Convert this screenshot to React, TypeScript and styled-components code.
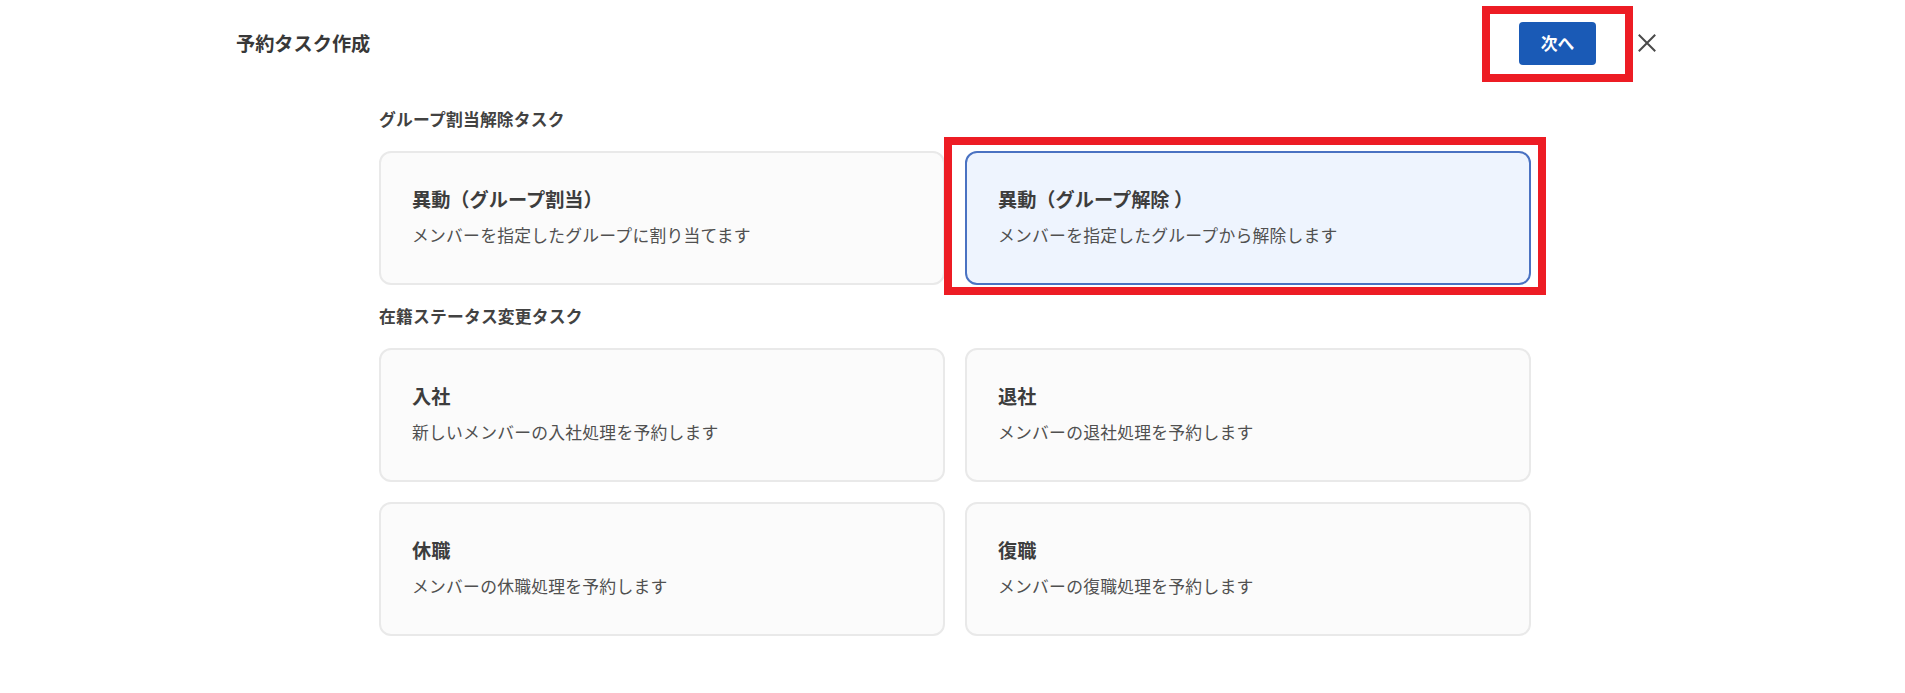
import styled, { createGlobalStyle } from "styled-components";

const GlobalStyle = createGlobalStyle`
  * {
    box-sizing: border-box;
  }
  body {
    margin: 0;
    background: #ffffff;
    font-family: "Noto Sans CJK JP", "Noto Sans", sans-serif;
    color: #3b3b3b;
  }
`;

type Task = {
  title: string;
  description: string;
  selected?: boolean;
};

const groupTasks: Task[] = [
  { title: "異動（グループ割当）", description: "メンバーを指定したグループに割り当てます" },
  { title: "異動（グループ解除 ）", description: "メンバーを指定したグループから解除します", selected: true },
];

const statusTasks: Task[] = [
  { title: "入社", description: "新しいメンバーの入社処理を予約します" },
  { title: "退社", description: "メンバーの退社処理を予約します" },
  { title: "休職", description: "メンバーの休職処理を予約します" },
  { title: "復職", description: "メンバーの復職処理を予約します" },
];

function CloseIcon() {
  return (
    <svg width="18" height="18" viewBox="0 0 18 18" fill="none">
      <path d="M1.5 1.5L16.5 16.5M16.5 1.5L1.5 16.5" stroke="#4a4a4a" strokeWidth="2" strokeLinecap="square" />
    </svg>
  );
}

function TaskCard({ task }: { task: Task }) {
  return (
    <Card $selected={task.selected}>
      <CardTitle>{task.title}</CardTitle>
      <CardText>{task.description}</CardText>
      {task.selected && <Highlight $top={-16} $right={-17} $bottom={-12} $left={-23} />}
    </Card>
  );
}

function App() {
  return (
    <Page>
      <GlobalStyle />
      <Header>
        <Title>予約タスク作成</Title>
        <Actions>
          <NextButton>
            次へ
            <Highlight $top={-16} $right={-37} $bottom={-17} $left={-37} />
          </NextButton>
          <CloseButton aria-label="閉じる">
            <CloseIcon />
          </CloseButton>
        </Actions>
      </Header>
      <Body>
        <Section>
          <SectionLabel>グループ割当解除タスク</SectionLabel>
          <CardGrid>
            {groupTasks.map((task) => (
              <TaskCard key={task.title} task={task} />
            ))}
          </CardGrid>
        </Section>
        <Section>
          <SectionLabel>在籍ステータス変更タスク</SectionLabel>
          <CardGrid>
            {statusTasks.map((task) => (
              <TaskCard key={task.title} task={task} />
            ))}
          </CardGrid>
        </Section>
      </Body>
    </Page>
  );
}

export default App;

const Page = styled.div`
  width: 1905px;
  min-height: 693px;
  background: #ffffff;
`;

const Header = styled.header`
  height: 85px;
  margin: 0 246px 0 236px;
  display: flex;
  align-items: center;
  justify-content: space-between;
`;

const Title = styled.h1`
  margin: 0;
  font-size: 19.2px;
  font-weight: 700;
  line-height: 28px;
  color: #383838;
`;

const Actions = styled.div`
  display: flex;
  align-items: center;
  gap: 39px;
  padding-top: 1px;
`;

const NextButton = styled.button`
  position: relative;
  width: 77px;
  height: 43px;
  border: none;
  border-radius: 4px;
  background: #1a5ab6;
  color: #ffffff;
  font-family: inherit;
  font-size: 16.8px;
  font-weight: 700;
  cursor: pointer;
`;

const CloseButton = styled.button`
  width: 24px;
  height: 24px;
  padding: 0;
  border: none;
  background: transparent;
  display: flex;
  align-items: center;
  justify-content: center;
  cursor: pointer;
`;

const Highlight = styled.span<{ $top: number; $right: number; $bottom: number; $left: number }>`
  position: absolute;
  top: ${({ $top }) => $top}px;
  right: ${({ $right }) => $right}px;
  bottom: ${({ $bottom }) => $bottom}px;
  left: ${({ $left }) => $left}px;
  border: 8px solid #ed1c24;
  pointer-events: none;
`;

const Body = styled.main`
  width: 1152px;
  margin-left: 379px;
  padding-top: 23px;
  display: flex;
  flex-direction: column;
  gap: 20px;
`;

const Section = styled.section`
  display: flex;
  flex-direction: column;
  gap: 20px;
`;

const SectionLabel = styled.h2`
  margin: 0;
  font-size: 16.8px;
  font-weight: 700;
  line-height: 23px;
  letter-spacing: 0.2px;
  color: #424242;
`;

const CardGrid = styled.div`
  display: grid;
  grid-template-columns: repeat(2, 566px);
  gap: 20px;
`;

const Card = styled.div<{ $selected?: boolean }>`
  position: relative;
  height: 134px;
  padding: 32px 31px;
  border: 2px solid ${({ $selected }) => ($selected ? "#4a72c2" : "#e9e9e9")};
  border-radius: 12px;
  background: ${({ $selected }) => ($selected ? "#eef4fe" : "#fbfbfb")};
  cursor: pointer;
`;

const CardTitle = styled.h3`
  margin: 0;
  font-size: 19.2px;
  font-weight: 700;
  line-height: 28.8px;
  color: #3d3d3d;
`;

const CardText = styled.p`
  margin: 9.6px 0 0;
  font-size: 16.8px;
  font-weight: 400;
  line-height: 25.2px;
  letter-spacing: 0.25px;
  color: #505050;
`;
